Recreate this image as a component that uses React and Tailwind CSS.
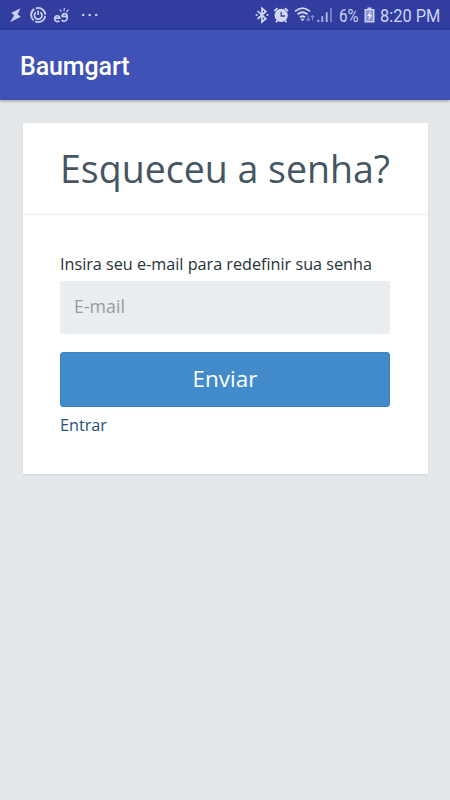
import React from 'react';

const NotificationIcons = () => (
    <svg className="w-[110px] h-[30px] text-[#c9cff5]" viewBox="0 0 110 30" fill="none" stroke="currentColor">
        {/* Bolt */}
        <path d="M20.6 8.2 L11.4 12.8 L14.2 15.6 L10 22.3 L20.8 16.8 L17.6 14.2 Z" fill="currentColor" stroke="none" />
        {/* Power ring */}
        <circle cx="38.2" cy="15" r="7.1" strokeWidth="1.9" strokeDasharray="13.2 1.67" strokeDashoffset="-1" />
        <path d="M36 12.2 A3.8 3.8 0 1 0 40.4 12.2 M38.2 10.5 V15" strokeWidth="1.7" />
        {/* Double e */}
        <path d="M54.6 18.1 H59.8 A2.6 2.9 0 1 0 59.2 20.6" strokeWidth="1.7" />
        <path d="M67.2 16.4 H62.2 A2.5 2.7 0 0 1 67.2 16.4 V18.2 A3.2 3 0 0 1 61.6 20.2" strokeWidth="1.7" />
        <path d="M61.3 11.6 L59.8 9.6 M64 11 L64.4 8 M66.4 12 L68.6 9.6" strokeWidth="1.2" />
        {/* More */}
        <g fill="currentColor" stroke="none">
            <circle cx="83.2" cy="15" r="1.3" />
            <circle cx="89.7" cy="15" r="1.3" />
            <circle cx="96.2" cy="15" r="1.3" />
        </g>
    </svg>
);

const SystemIcons = () => (
    <svg className="w-[84px] h-[30px] text-[#d3d8f8]" viewBox="254 0 84 30" fill="none" stroke="currentColor">
        {/* Bluetooth */}
        <path d="M258.6 11 L266.8 18.7 L263 22 V8.3 L266.8 11.5 L258.6 19" strokeWidth="1.7" />
        <circle cx="257.6" cy="15" r="1.1" fill="currentColor" stroke="none" />
        <circle cx="268.5" cy="15" r="1.1" fill="currentColor" stroke="none" />
        {/* Alarm */}
        <circle cx="282.2" cy="15.4" r="6.6" fill="currentColor" stroke="none" />
        <path d="M275.4 11 L278.5 8.2 M285.9 8.2 L289 11 M278.5 20.5 L276.9 22.2 M286 20.5 L287.5 22.2" strokeWidth="1.8" />
        <path d="M282.2 11.8 V16 H286" stroke="#3340a0" strokeWidth="1.3" />
        {/* Wifi */}
        <path d="M296 11.4 Q303.5 4.8 311 11.4 M298.5 14.4 Q303.5 10.2 308.5 14.4 M301 17.3 Q303.5 15.2 306 17.3" strokeWidth="1.8" />
        <path d="M303.5 21.2 L301.3 18.8 H305.7 Z" fill="currentColor" stroke="none" />
        <path d="M309.2 15.5 V20.8 M307.3 18.9 L309.2 20.8 L311 18.9 M313.5 20.8 V15.5 M311.7 17.4 L313.5 15.5 L315.3 17.4" strokeWidth="1.1" opacity="0.5" />
        {/* Signal */}
        <path d="M319.3 22 V19.8 M323.3 22 V16.3 M327.7 22 V12.3" strokeWidth="1.8" opacity="0.8" />
        <path d="M332 22 V8" strokeWidth="1.8" opacity="0.45" />
    </svg>
);

const BatteryIcon = () => (
    <svg className="w-3 h-[30px] text-[#c9cff5]" viewBox="0 0 12 30">
        <path d="M3.5 7.5 H7.5 V9 H10.5 V22.5 H0.5 V9 H3.5 Z" fill="currentColor" />
        <path d="M2 10.5 H9 V21 H2 Z" fill="#8b95d5" />
        <path d="M7 10.8 L3 16 H5.3 L4.2 20.5 L8.3 14.8 H6 Z" fill="#eef0ff" />
    </svg>
);

const StatusBar = () => (
    <div className="flex items-center justify-between h-[30px] pr-[9px] bg-[#313d9f] font-[Roboto,sans-serif] text-lg leading-[30px] text-[#cdd3f6]">
        <NotificationIcons />
        <div className="flex items-center">
            <SystemIcons />
            <span className="w-[23px] pl-[2px] whitespace-nowrap">
                <span className="inline-block origin-left scale-x-[0.84] translate-y-px">6%</span>
            </span>
            <span className="ml-[4px]"><BatteryIcon /></span>
            <span className="w-[61px] ml-[4px] whitespace-nowrap">
                <span className="inline-block origin-left scale-x-[0.91] translate-y-px">8:20 PM</span>
            </span>
        </div>
    </div>
);

const App = () => {
    return (
        <div className="h-[800px] w-[450px] overflow-hidden bg-[#e4e8eb] font-['Open_Sans',sans-serif]">
            <StatusBar />
            <header className="relative flex items-center h-[70px] px-5 pt-[3px] bg-[#4052b5] shadow-[0_1px_3px_rgba(0,0,0,0.35)]">
                <h1 className="font-[Roboto,sans-serif] text-[25px] font-medium leading-none tracking-[-0.1px] text-white">Baumgart</h1>
            </header>

            <main className="pt-[22.5px] px-[22.5px]">
                <div className="h-[351px] bg-white shadow-[0_1px_2px_rgba(0,0,0,0.08)]">
                    <h2 className="h-[92px] border-b border-[#eceff1] text-center text-[37.5px] leading-[92px] whitespace-nowrap text-[#455561]">
                        Esqueceu a senha?
                    </h2>

                    <form className="flex flex-col px-[37.5px] pt-[37px]" onSubmit={(e) => e.preventDefault()}>
                        <label htmlFor="email" className="text-[16.2px] leading-[24px] whitespace-nowrap text-[#263138]">
                            Insira seu e-mail para redefinir sua senha
                        </label>
                        <input
                            id="email"
                            type="email"
                            placeholder="E-mail"
                            className="h-[53px] mt-[5.5px] px-[14px] pb-[3px] rounded-[3px] bg-[#eaeef1] text-[17.8px] placeholder:text-[#999b9d]"
                        />
                        <button type="submit" className="h-[55px] mt-[18px] pb-[2px] rounded-[3px] border border-[#3b84c2] bg-[#428bca] text-[22.5px] text-white">
                            Enviar
                        </button>
                        <a href="#" className="self-start mt-[6px] text-[16.2px] leading-[24px] text-[#23527c]">
                            Entrar
                        </a>
                    </form>
                </div>
            </main>
        </div>
    );
};

export default App;
